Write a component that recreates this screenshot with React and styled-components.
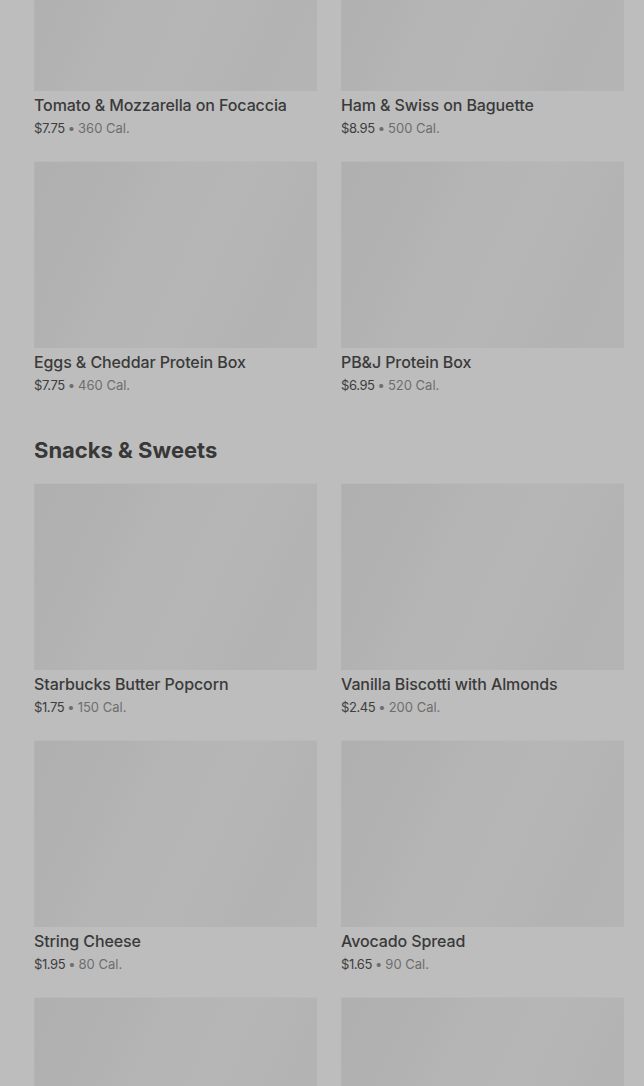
import React from "react";
import styled, { createGlobalStyle } from "styled-components";

const Global = createGlobalStyle`
  html, body { margin: 0; padding: 0; background: #bdbdbd; overflow: hidden; }
  body { font-family: Inter, "Noto Sans", Arial, sans-serif; }
`;

const Page = styled.div`
  height: 1086px;
  overflow: hidden;
  padding: 0 20px 0 34px;
  background: #bdbdbd;
`;

const Scroller = styled.div`
  margin-top: -96px;
`;

const Section = styled.section`
  & + & { margin-top: 42px; }
`;

const Heading = styled.h2`
  margin: 0 0 19px;
  font-size: 22px;
  line-height: 28px;
  font-weight: 700;
  color: #383838;
  letter-spacing: 0;
`;

const Grid = styled.div`
  display: grid;
  grid-template-columns: 1fr 1fr;
  column-gap: 24px;
  row-gap: 24px;
`;

const Card = styled.div`
  display: flex;
  flex-direction: column;
`;

const Thumb = styled.div`
  height: 187px;
  background: linear-gradient(115deg, #b0b0b0 0%, #b1b1b1 20%, #b5b5b5 40%, #b6b6b6 60%, #b3b3b3 80%, #b4b4b4 100%);
  box-shadow: inset 0 1px 0 #b9b9b9, inset 1px 0 0 #b3b3b3;
`;

const Title = styled.div`
  margin-top: 4px;
  font-size: 16px;
  line-height: 20px;
  font-weight: 500;
  color: #3a3a3a;
  white-space: nowrap;
  letter-spacing: -0.1px;
`;

const Meta = styled.div`
  margin-top: 4px;
  font-size: 13px;
  line-height: 18px;
  color: #6e6e6e;
  white-space: nowrap;
`;

const Price = styled.span`
  color: #3e3e3e;
  letter-spacing: -0.4px;
`;

const Dot = styled.span`
  margin: 0 3px;
`;

const sections = [
  {
    title: null,
    items: [
      ["Tomato & Mozzarella on Focaccia", "$7.75", "360"],
      ["Ham & Swiss on Baguette", "$8.95", "500"],
      ["Eggs & Cheddar Protein Box", "$7.75", "460"],
      ["PB&J Protein Box", "$6.95", "520"],
    ],
  },
  {
    title: "Snacks & Sweets",
    items: [
      ["Starbucks Butter Popcorn", "$1.75", "150"],
      ["Vanilla Biscotti with Almonds", "$2.45", "200"],
      ["String Cheese", "$1.95", "80"],
      ["Avocado Spread", "$1.65", "90"],
      ["", "", ""],
      ["", "", ""],
    ],
  },
];

export default function App() {
  return (
    <Page>
      <Global />
      <Scroller>
        {sections.map((s, i) => (
          <Section key={i}>
            {s.title && <Heading>{s.title}</Heading>}
            <Grid>
              {s.items.map(([name, price, cal], j) => (
                <Card key={j}>
                  <Thumb />
                  {name && <Title>{name}</Title>}
                  {name && (
                    <Meta>
                      <Price>{price}</Price>
                      <Dot>•</Dot>
                      {cal} Cal.
                    </Meta>
                  )}
                </Card>
              ))}
            </Grid>
          </Section>
        ))}
      </Scroller>
    </Page>
  );
}
